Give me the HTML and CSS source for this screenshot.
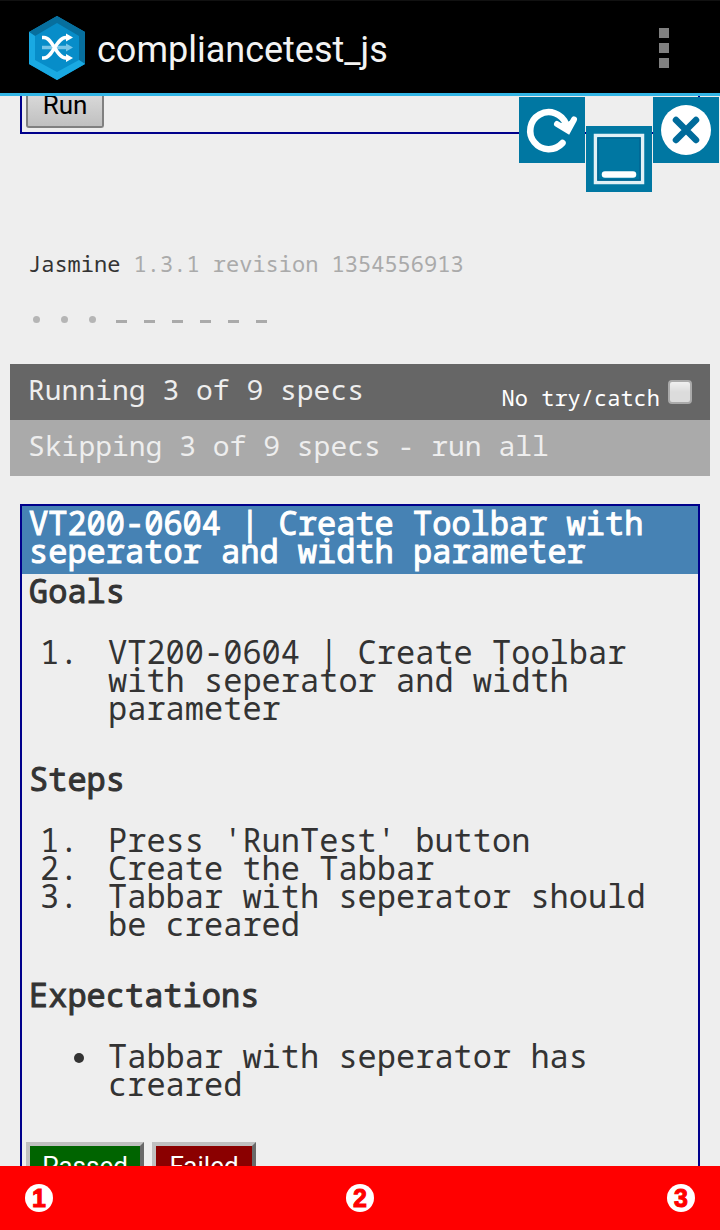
FILE: index.html
```html
<!DOCTYPE html>
<html lang="en">
<head>
<meta charset="utf-8">
<title>compliancetest_js</title>
<link rel="stylesheet" href="styles.css">
</head>
<body>
<div class="screen">
  <header class="appbar">
    <svg class="logo" width="58" height="66" viewBox="0 0 58 66">
      <path d="M29 1 57 17V49L29 65 1 49V17Z" fill="#078dc9"/>
      <path d="M29 1 57 17V49L51 45V21L29 8 7 21 1 17Z" fill="#076f9e"/>
      <path d="M1 17 7 21V45L29 57 51 45 57 49 29 65 1 49Z" fill="#19a9e2"/>
      <path d="M14 32.500H39" stroke="#78c5e7" stroke-width="3.500"/>
      <path d="M38 28.500 45 32.500 38 36.500Z" fill="#78c5e7"/>
      <path d="M14 22.500H16C25 22.500 28 43 38 43H40M14 43H16C25 43 28 22.500 38 22.500H40" fill="none" stroke="#fff" stroke-width="3.500"/>
      <path d="M38 18.500 45 22.500 38 26.500ZM38 39 45 43 38 47Z" fill="#fff"/>
    </svg>
    <h1 class="app-title">compliancetest_js</h1>
    <div class="overflow"><i></i><i></i><i></i></div>
  </header>
  <main class="view">
    <section class="run-box"><button class="run">Run</button></section>
    <div class="banner">Jasmine <span>1.3.1 revision 1354556913</span></div>
    <div class="symbols"><i class="dot"></i><i class="dot"></i><i class="dot"></i><i class="dash"></i><i class="dash"></i><i class="dash"></i><i class="dash"></i><i class="dash"></i><i class="dash"></i></div>
    <div class="bar running"><span class="label">Running 3 of 9 specs</span><label class="catch"><span>No try/catch</span><span class="check"></span></label></div>
    <div class="bar skipping"><span class="label">Skipping 3 of 9 specs - run all</span></div>
    <section class="spec">
      <h2 class="spec-title">VT200-0604 | Create Toolbar with seperator and width parameter</h2>
      <h3>Goals</h3>
      <ol><li><b>1.</b><span>VT200-0604 | Create Toolbar with seperator and width parameter</span></li></ol>
      <h3>Steps</h3>
      <ol>
        <li><b>1.</b><span>Press 'RunTest' button</span></li>
        <li><b>2.</b><span>Create the Tabbar</span></li>
        <li><b>3.</b><span>Tabbar with seperator should be creared</span></li>
      </ol>
      <h3>Expectations</h3>
      <ul><li><i class="bullet"></i><span>Tabbar with seperator has creared</span></li></ul>
      <div class="actions"><button class="passed">Passed</button><button class="failed">Failed</button></div>
    </section>
  </main>
  <footer class="toolbar"><span>1</span><span>2</span><span>3</span></footer>
  <nav class="floating">
    <svg width="66" height="66" viewBox="0 0 66 66"><rect width="66" height="66" fill="#0077a2"/><path d="M43.500 46A18.500 18.500 0 1 1 47 27" fill="none" stroke="#fff" stroke-width="6.500" stroke-linecap="round"/><path d="M38 27 49 33.500 55 22.500" fill="none" stroke="#fff" stroke-width="6" stroke-linecap="round" stroke-linejoin="miter"/><path d="M40 26 49 33 54 22 47 26Z" fill="#fff"/></svg>
    <svg class="low" width="66" height="66" viewBox="0 0 66 66"><rect width="66" height="66" fill="#0077a2"/><rect x="9.500" y="9.500" width="47" height="47" fill="none" stroke="#e0f0f6" stroke-width="3.500"/><rect x="12" y="12" width="42" height="42" fill="none" stroke="#006492" stroke-width="1.500"/><path d="M19 48.500H47" stroke="#fff" stroke-width="6.500" stroke-linecap="round"/></svg>
    <svg width="66" height="66" viewBox="0 0 66 66"><rect width="66" height="66" fill="#0077a2"/><circle cx="33" cy="33" r="25" fill="#fff"/><path d="M23 23 43 43M43 23 23 43" stroke="#006b9b" stroke-width="6.500" stroke-linecap="round"/></svg>
  </nav>
</div>
</body>
</html>
```
FILE: styles.css
```css
* { box-sizing: border-box; }
body { margin: 0; }
.screen {
  position: relative;
  display: flex;
  flex-direction: column;
  width: 720px;
  height: 1230px;
  overflow: hidden;
  background: #eee;
  color: #333;
  font: 32px/28px "Droid Sans Mono", "Noto Sans Mono", "DejaVu Sans Mono", monospace;
}
.appbar {
  display: flex;
  align-items: center;
  flex: none;
  height: 96px;
  padding: 0 51px 0 28px;
  border-top: 1px solid #111;
  border-bottom: 3px solid #33b5e5;
  background: #000;
}
.logo { margin-top: 2px; }
.app-title {
  flex: 1;
  margin: 6px 0 0 11px;
  color: #f3f3f3;
  font: 400 36px/44px Roboto, sans-serif;
}
.overflow { display: grid; gap: 5px; margin-top: 1px; }
.overflow i { width: 10px; height: 10px; background: #808080; }
.view { flex: 1; min-height: 0; overflow: hidden; }
.run-box {
  height: 38px;
  margin: 0 20px;
  padding: 0 4px;
  border: 2px solid #00008b;
  border-top: 0;
}
button { display: block; font: 26px/30px Roboto, sans-serif; white-space: nowrap; }
.run {
  width: 78px;
  height: 32px;
  padding: 0 0 11px;
  border: 2px solid #808080;
  border-top: 0;
  border-radius: 0 0 3px 3px;
  background: linear-gradient(#d8d8d8, #c0c0c0);
  color: #000;
  line-height: 17px;
}
.banner { margin: 115px 0 0 28px; font-size: 22px; }
.banner span { color: #aaa; }
.symbols { display: flex; height: 28px; margin: 28px 0 31px 28px; }
.symbols i { display: flex; align-items: center; width: 28px; }
.symbols i::before { content: ""; margin-left: 5px; background: #b5b5b5; }
.symbols .dot::before { width: 7px; height: 7px; border-radius: 50%; }
.symbols .dash::before { width: 11px; height: 3px; margin: 5px 0 0 4px; background: #aaa; }
.bar {
  display: flex;
  justify-content: space-between;
  height: 56px;
  margin: 0 10px;
  padding: 0 18px;
  color: #eee;
  font-size: 28px;
  line-height: 50px;
}
.running { background: #666; }
.skipping { background: #aaa; }
.catch { display: flex; gap: 8px; color: #fff; font-size: 22px; line-height: 66px; }
.check {
  width: 24px;
  height: 24px;
  margin-top: 16px;
  border: 2px solid #aaa;
  border-radius: 4px;
  background: linear-gradient(#f0f0f0, #dcdcdc 50%);
}
.spec { height: 800px; margin: 28px 20px 0; border: 2px solid #00008b; }
.spec-title { height: 68px; padding: 3px 6px 0 7px; background: #4682b4; color: #fff; }
h2, h3 { margin: 0; font-size: 32px; font-weight: 400; -webkit-text-stroke: 1px currentColor; }
h3 { padding: 3px 6px 0 7px; }
ol, ul { margin: 33px 0 40px; padding: 0; list-style: none; }
li { display: flex; padding-left: 18px; }
li b { width: 68px; font-weight: 400; }
li span { flex: 1; }
.bullet { width: 10px; height: 10px; margin: 11px 24px 0 34px; border-radius: 50%; background: #333; }
.actions { display: flex; gap: 8px; margin-top: 44px; padding-left: 4px; }
.actions button { height: 48px; padding: 0; border: 4px solid; border-color: #c0c0c0 #696969 #696969 #c0c0c0; color: #fff; }
.passed { width: 118px; background: #006400; }
.failed { width: 104px; background: #8b0000; }
.toolbar {
  display: flex;
  align-items: center;
  justify-content: space-between;
  flex: none;
  height: 64px;
  padding: 0 25px;
  background: #f00;
}
.toolbar span {
  width: 28px;
  height: 28px;
  border-radius: 50%;
  background: #fff;
  color: #f00;
  font: 900 25px/29px "Liberation Sans", sans-serif;
  text-align: center;
  -webkit-text-stroke: 1px #f00;
}
.floating { position: absolute; top: 97px; right: 1px; display: flex; gap: 1px; }
.floating .low { margin-top: 29px; }
```
